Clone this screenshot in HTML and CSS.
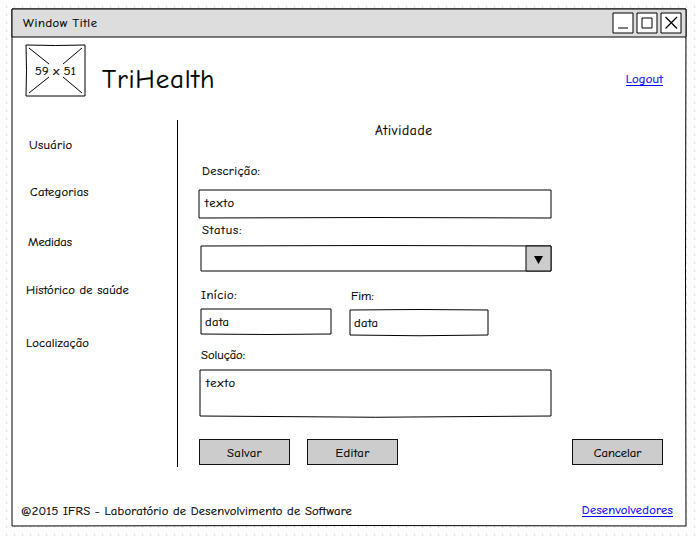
FILE: index.html
```html
<!DOCTYPE html>
<html lang="pt-BR">
<head>
<meta charset="utf-8">
<title>TriHealth</title>
<link rel="stylesheet" href="styles.css">
</head>
<body>
<div class="window">
  <svg class="sketch" width="674" height="517"><path d="M0 0H674Q673 258 674 517Q337 516 0 517Z"/></svg>
  <header class="titlebar">
    <svg class="sketch bar" width="674" height="28"><path d="M0 0H674V28H0Z"/></svg>
    <span class="t-window">Window Title</span>
    <svg class="controls" width="70" height="22" viewBox="0 0 70 22">
      <path class="box" d="M1 1H21V21H1ZM25 1H45V21H25ZM49 1H69V21H49Z"/>
      <path d="M6 16H16M30 6H40V16H30Z"/><path class="cross" d="M53.5 5L65 16.5M65 5L53.5 16.5"/>
    </svg>
  </header>
  <div class="brand">
    <div class="logo">
      <svg class="sketch" width="59" height="51"><path d="M0 0Q30 1 59 0V51H0Q1 25 0 0ZM3 3L23 19M56 3L37 19M3 48L23 32M56 48L37 32"/></svg>
      <span class="t-size">59 x 51</span>
    </div>
    <h1>TriHealth</h1>
    <a class="logout">Logout</a>
  </div>
  <div class="main">
    <nav>
      <a class="n1">Usuário</a>
      <a class="n2">Categorias</a>
      <a class="n3">Medidas</a>
      <a class="n4">Histórico de saúde</a>
      <a class="n5">Localização</a>
    </nav>
    <form>
      <h2>Atividade</h2>
      <label class="l-desc">Descrição:</label>
      <div class="field desc"><svg class="sketch" width="352" height="28"><path d="M0 0H352V28Q176 27 0 28Z"/></svg><span class="t-texto">texto</span></div>
      <label class="l-status">Status:</label>
      <div class="field select"><svg class="sketch" width="350" height="25"><path d="M0 0Q175 -1 350 0V25H0Z"/><path class="grey" d="M325 0H350V25H325Z"/><path class="arrow" d="M333 10H342L337.5 18Z"/></svg></div>
      <div class="dates">
        <div class="start">
          <label class="l-start">Início:</label>
          <div class="field"><svg class="sketch" width="130" height="25"><path d="M0 0H130V25Q65 26 0 25Z"/></svg><span class="t-data">data</span></div>
        </div>
        <div class="end">
          <label class="l-end">Fim:</label>
          <div class="field"><svg class="sketch" width="138" height="25"><path d="M0 0Q69 -1 138 0V25Q69 26.5 0 25Z"/></svg><span class="t-data">data</span></div>
        </div>
      </div>
      <label class="l-sol">Solução:</label>
      <div class="field area"><svg class="sketch" width="351" height="46"><path d="M0 0H351V46Q175 48.5 0 46Z"/></svg><span class="t-texto">texto</span></div>
      <div class="actions">
        <button type="button" class="b1">Salvar</button>
        <button type="button" class="b2">Editar</button>
        <button type="button" class="b3">Cancelar</button>
      </div>
    </form>
  </div>
  <footer><span class="t-copy">@2015 IFRS - Laboratório de Desenvolvimento de Software</span><a class="devs">Desenvolvedores</a></footer>
</div>
</body>
</html>
```
FILE: styles.css
```css
* { box-sizing: border-box; }
body {
  margin: 0; height: 537px; overflow: hidden; padding: 9px 0 0 12px;
  background: #fff url("data:image/svg+xml,%3Csvg xmlns='http://www.w3.org/2000/svg' width='8' height='8'%3E%3Crect x='6' y='6' width='1' height='2' fill='%23e2e2e2'/%3E%3C/svg%3E");
  font: 12.5px/18px "Comic Sans MS", "Comic Neue", "Noto Sans", sans-serif; color: #000;
  -webkit-text-stroke: 0.2px; letter-spacing: .25px;
}
.window { position: relative; isolation: isolate; width: 674px; height: 517px; }
.sketch { position: absolute; left: 0; top: 0; z-index: -1; overflow: visible; fill: #fff; stroke: #000; stroke-width: 1; }
.bar { fill: #ddd; }
.grey { fill: #ccc; }
.arrow { fill: #000; stroke: none; }
span, a, label { display: block; height: 16px; white-space: nowrap; }
.titlebar { position: relative; height: 28px; padding: 3px 4px 0 11px; display: flex; justify-content: space-between; }
.t-window { margin-top: 2px; letter-spacing: .6px; }
.controls { fill: none; stroke: #000; }
.controls .box { fill: #fff; }
.controls .cross { stroke-width: 1.3; }
.brand { display: flex; height: 81px; padding: 8px 23px 0 14px; }
.logo { position: relative; width: 59px; height: 51px; padding-top: 18px; display: flex; justify-content: center; }
.t-size { line-height: 16px; }
h1 { margin: 19px auto 0 17px; font-size: 27px; line-height: 32px; font-weight: normal; white-space: nowrap; letter-spacing: .8px; }
.logout, .devs { color: #00f; border-bottom: 1px solid #00f; }
.logout { margin-top: 25px; }
.main { display: grid; grid-template-columns: 166px 1fr; height: 380px; }
nav { margin-top: 2px; height: 347px; padding: 16px 0 0 14px; border-right: 1px solid #000; }
.n1 { margin: 0 0 31px 3px; letter-spacing: .35px; }
.n2 { margin: 0 0 34px 4px; }
.n3 { margin: 0 0 32px 2px; letter-spacing: -.1px; }
.n4 { margin-bottom: 37px; letter-spacing: .2px; }
.n5 { letter-spacing: .15px; }
form { padding: 4px 0 0 21px; }
h2 { margin: 0 0 24px 176px; height: 16px; font-size: 13.5px; line-height: 18px; font-weight: normal; letter-spacing: .7px; }
.field { position: relative; isolation: isolate; }
.t-texto { letter-spacing: 1px; }
.t-data { letter-spacing: .4px; }
.desc { width: 352px; height: 28px; margin: 12px 0 3px; padding: 4px 6px; }
.l-desc, .l-status { margin-left: 3px; }
.l-desc { letter-spacing: .38px; }
.l-status { letter-spacing: .9px; }
.select { width: 350px; height: 25px; margin: 9px 0 15px 2px; }
.dates { display: flex; height: 60px; gap: 19px; padding-left: 2px; }
.dates .field { margin-top: 7px; height: 25px; padding: 4px; }
.start { width: 130px; }
.end { width: 138px; padding-top: 1px; }
.l-start { letter-spacing: .5px; }
.l-end { margin-left: 1px; letter-spacing: 0; }
.l-sol { margin-left: 2px; letter-spacing: 0; }
.area { width: 351px; height: 46px; margin: 8px 0 23px 1px; padding: 4px 6px; }
.actions { display: flex; width: 464px; gap: 17px; }
button { width: 91px; height: 26px; padding: 1px 0 0; border: 1px solid #111; background: #ccc; font: inherit; color: inherit; letter-spacing: .4px; }
.b3 { margin-left: auto; letter-spacing: 0; }
footer { display: flex; justify-content: space-between; padding: 4px 13px 0 9px; }
.devs { margin-top: -1px; }
```
